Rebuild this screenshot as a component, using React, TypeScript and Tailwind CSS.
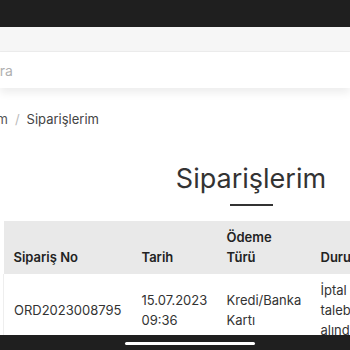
import React from 'react';

type Order = {
  no: string;
  date: string;
  time: string;
  payment: string;
  status: string;
  total: string;
};

const orders: Order[] = [
  { no: 'ORD2023008795', date: '15.07.2023', time: '09:36', payment: 'Kredi/Banka Kartı', status: 'İptal talebi alındı', total: '249,90 TL' },
];

const font = { fontFamily: 'Inter, "Noto Sans", sans-serif' };

export default function App() {
  return (
    <div className="relative w-[350px] h-[350px] overflow-hidden bg-white text-[#333]" style={font}>
      <div className="h-[27px] bg-[#1f1f1f]" />
      <div className="h-[25px] bg-[#f6f6f6] border-b border-[#ececec]" />
      <div className="h-[36px] bg-white flex items-center shadow-[0_5px_8px_rgba(0,0,0,0.07)]">
        <span className="ml-[-10px] text-[14px] text-[#b0b0b0]">Ara</span>
      </div>

      <div className="w-[502px]">
        <nav className="mt-[21px] ml-[-46px] flex items-center gap-[7px] text-[13px] leading-[20px]">
          <span className="text-[#555]">Hesabım</span>
          <span className="text-[#bbb]">/</span>
          <span className="text-[#444]">Siparişlerim</span>
        </nav>

        <div className="flex flex-col items-center mt-[33px]">
          <h1 className="text-[27px] leading-[34px] font-normal text-[#333]">Siparişlerim</h1>
          <div className="mt-[8px] w-[43px] h-[2px] bg-[#333]" />
        </div>

        <div className="ml-[3px] mt-[15px]">
          <table className="table-fixed w-[510px] border-collapse text-left text-[13px] leading-[20px]">
            <thead>
              <tr className="bg-[#e9e9e9] align-bottom">
                <th className="w-[128px] px-[10px] pt-[6px] pb-[7px] font-semibold text-[#222]">Sipariş No</th>
                <th className="w-[85px] px-[10px] pt-[6px] pb-[7px] font-semibold text-[#222]">Tarih</th>
                <th className="w-[94px] pl-[10px] pr-[8px] pt-[6px] pb-[7px] font-semibold text-[#222]">Ödeme Türü</th>
                <th className="w-[64px] px-[10px] pt-[6px] pb-[7px] font-semibold text-[#222]">Durum</th>
                <th className="w-[75px] px-[10px] pt-[6px] pb-[7px] font-semibold text-[#222]">Tutar</th>
                <th className="w-[64px] px-[10px] pt-[6px] pb-[7px] font-semibold text-[#222]">Detay</th>
              </tr>
            </thead>
            <tbody>
              {orders.map((o) => (
                <tr key={o.no} className="align-middle border-l border-b border-[#eee] text-[#333]">
                  <td className="px-[10px] py-[6px]">{o.no}</td>
                  <td className="px-[10px] py-[6px]">
                    {o.date}
                    <br />
                    {o.time}
                  </td>
                  <td className="pl-[10px] pr-[8px] py-[6px]">{o.payment}</td>
                  <td className="px-[10px] py-[6px]">{o.status}</td>
                  <td className="px-[10px] py-[6px]">{o.total}</td>
                  <td className="px-[10px] py-[6px]">Detay</td>
                </tr>
              ))}
            </tbody>
          </table>
        </div>
      </div>

      <div className="absolute bottom-0 left-0 w-full h-[15px] bg-[#1f1f1f]">
        <div className="mt-[7px] ml-[125px] w-[130px] h-[3px] rounded-full bg-white" />
      </div>
    </div>
  );
}
